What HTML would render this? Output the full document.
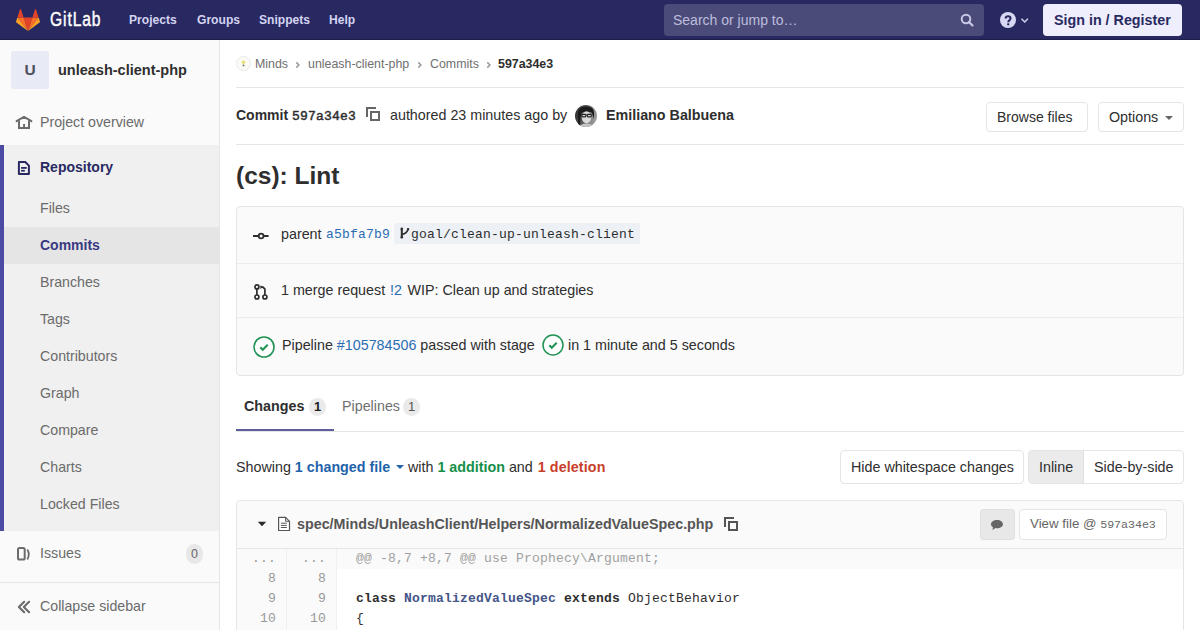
<!DOCTYPE html>
<html><head><meta charset="utf-8">
<style>
*{box-sizing:border-box;margin:0;padding:0}
html,body{width:1200px;height:630px;overflow:hidden;background:#fff}
body{font-family:"Liberation Sans",sans-serif;font-size:14px;color:#2e2e2e;position:relative}
.a{position:absolute;white-space:nowrap;line-height:1}
.mono{font-family:"Liberation Mono",monospace}
b{font-weight:bold}
/* header */
#hdr{position:absolute;left:0;top:0;width:1200px;height:40px;background:#292961}
.nav{color:#d4d4f2;font-weight:bold;font-size:12.1px}
/* sidebar */
#side{position:absolute;left:0;top:40px;width:220px;height:590px;background:#fafafa;border-right:1px solid #e5e5e5}
.si{color:#6b6b6b;font-size:14.2px}
.bc{font-size:12.4px;color:#707070}
.btn{border:1px solid #e5e5e5;border-radius:4px;background:#fff}
.badge{width:17px;height:18px;border-radius:9px;background:#eaeaea;color:#555;font-size:13px;text-align:center;line-height:18px}
.ln{font-size:13px;color:#999;text-align:right;letter-spacing:0.2px}
.code{font-size:13px;color:#2e2e2e;letter-spacing:0.2px}
</style></head><body>

<div id="hdr">
  <div class="a" style="left:0;top:39px;width:1200px;height:1px;background:#1e1e4a"></div>
  <svg class="a" style="left:16px;top:9px" width="24" height="22" viewBox="0 0 36 33">
    <path fill="#e24329" d="M18 33L24.6 12.6H11.4z"/>
    <path fill="#fc6d26" d="M18 33L11.4 12.6H2.1z"/>
    <path fill="#fca326" d="M2.1 12.6L.1 18.8c-.2.6 0 1.2.5 1.5L18 33z"/>
    <path fill="#e24329" d="M2.1 12.6h9.3L7.4.3c-.2-.6-1.1-.6-1.3 0z"/>
    <path fill="#fc6d26" d="M18 33l6.6-20.4h9.3z"/>
    <path fill="#fca326" d="M33.9 12.6l2 6.2c.2.6 0 1.2-.5 1.5L18 33z"/>
    <path fill="#e24329" d="M33.9 12.6h-9.3L28.6.3c.2-.6 1.1-.6 1.3 0z"/>
  </svg>
  <div class="a" style="left:50px;top:10px;font-size:19.6px;letter-spacing:1.1px;color:#fff;-webkit-text-stroke:0.4px #fff;transform:scaleX(0.8);transform-origin:0 0">GitLab</div>
  <div class="a nav" style="left:129px;top:14px">Projects</div>
  <div class="a nav" style="left:197px;top:14px">Groups</div>
  <div class="a nav" style="left:259px;top:14px">Snippets</div>
  <div class="a nav" style="left:329px;top:14px">Help</div>
  <div class="a" style="left:664px;top:4px;width:320px;height:32px;border-radius:4px;background:rgba(255,255,255,0.16)"></div>
  <div class="a" style="left:673px;top:13px;font-size:14px;color:#bdbddb">Search or jump to…</div>
  <svg class="a" style="left:960px;top:13px" width="14" height="14" viewBox="0 0 14 14"><circle cx="6" cy="6" r="4.3" fill="none" stroke="#c8c8e6" stroke-width="2"/><path d="M9 9l3.5 3.5" stroke="#c8c8e6" stroke-width="2.2" stroke-linecap="round"/></svg>
  <svg class="a" style="left:1000px;top:12px" width="32" height="16" viewBox="0 0 32 16"><circle cx="8" cy="8" r="8" fill="#d8d8f4"/><path d="M5.6 6.4C5.6 4.9 6.7 4.2 8 4.2c1.4 0 2.5.9 2.5 2.2 0 1.8-2.2 1.9-2.2 3.8" fill="none" stroke="#292961" stroke-width="2.1"/><rect x="7.2" y="11.3" width="2.1" height="2" fill="#292961"/><path d="M21.5 6.8l3.2 3.2 3.2-3.2" fill="none" stroke="#d1d1f0" stroke-width="1.5"/></svg>
  <div class="a" style="left:1043px;top:4px;width:139px;height:32px;border-radius:4px;background:#eeeefc"></div>
  <div class="a" style="left:1054px;top:13px;font-size:14.3px;font-weight:bold;color:#292961">Sign in / Register</div>
</div>

<div id="side">
  <div class="a" style="left:11px;top:11px;width:38px;height:38px;border-radius:3px;background:#e8eaf5"></div>
  <div class="a" style="left:11px;top:22px;width:38px;text-align:center;font-size:15.5px;font-weight:bold;color:#4f4f5c">U</div>
  <div class="a" style="left:58px;top:23px;font-size:14.5px;font-weight:bold;color:#2e2e2e">unleash-client-php</div>
  <!-- project overview -->
  <svg class="a" style="left:12px;top:70px" width="24" height="24" viewBox="0 0 24 24"><path d="M4.6 11.2L12 6.9l7.4 4.3" fill="none" stroke="#6b6b6b" stroke-width="2" stroke-linecap="round" stroke-linejoin="round"/><path d="M7 10.5V18h10v-7.5" fill="none" stroke="#6b6b6b" stroke-width="2"/><rect x="11.1" y="14" width="1.9" height="4" fill="#6b6b6b"/></svg>
  <div class="a si" style="left:40px;top:75px">Project overview</div>
  <!-- repository section -->
  <div class="a" style="left:0;top:105px;width:219px;height:386px;background:#f0f0f0"></div>
  <div class="a" style="left:0;top:105px;width:4px;height:386px;background:#4b4ba3"></div>
  <div class="a" style="left:4px;top:187px;width:215px;height:37px;background:#e5e5e5"></div>
  <svg class="a" style="left:12px;top:116px" width="24" height="24" viewBox="0 0 24 24"><path d="M6.9 6H13.3L16.9 9.6V17.9H6.9z" fill="none" stroke="#292961" stroke-width="2" stroke-linejoin="round"/><rect x="9.1" y="11" width="5.6" height="1.8" fill="#292961"/><rect x="9.1" y="13.9" width="3.7" height="1.7" fill="#292961"/></svg>
  <div class="a" style="left:40px;top:120px;font-weight:bold;color:#292961">Repository</div>
  <div class="a si" style="left:40px;top:161px">Files</div>
  <div class="a" style="left:40px;top:198px;font-weight:bold;color:#393982">Commits</div>
  <div class="a si" style="left:40px;top:235px">Branches</div>
  <div class="a si" style="left:40px;top:272px">Tags</div>
  <div class="a si" style="left:40px;top:309px">Contributors</div>
  <div class="a si" style="left:40px;top:346px">Graph</div>
  <div class="a si" style="left:40px;top:383px">Compare</div>
  <div class="a si" style="left:40px;top:420px">Charts</div>
  <div class="a si" style="left:40px;top:457px">Locked Files</div>
  <!-- issues -->
  <svg class="a" style="left:12px;top:501px" width="24" height="24" viewBox="0 0 24 24"><rect x="6" y="7" width="6.7" height="11.6" rx="1.6" fill="none" stroke="#6b6b6b" stroke-width="2"/><path d="M15.3 8.6Q18.4 13.5 15.3 18.4" fill="none" stroke="#6b6b6b" stroke-width="1.8"/></svg>
  <div class="a si" style="left:40px;top:506px">Issues</div>
  <div class="a" style="left:186px;top:504px;width:17px;height:20px;border-radius:9px;background:#e8e8e8;color:#666;font-size:12.5px;text-align:center;line-height:20px">0</div>
  <div class="a" style="left:0;top:542px;width:219px;height:1px;background:#e5e5e5"></div>
  <svg class="a" style="left:12px;top:554px" width="24" height="24" viewBox="0 0 24 24"><path d="M12.2 7.8L6.9 13l5.3 5.2M17.1 7.8L11.8 13l5.3 5.2" fill="none" stroke="#6b6b6b" stroke-width="2.1" stroke-linecap="round" stroke-linejoin="round"/></svg>
  <div class="a si" style="left:40px;top:559px">Collapse sidebar</div>
</div>

<div id="main">
  <!-- breadcrumbs -->
  <svg class="a" style="left:236px;top:56px" width="15" height="15" viewBox="0 0 15 15"><circle cx="7.5" cy="7.5" r="7" fill="#fbfbf6" stroke="#e8e8ec" stroke-width="1"/><circle cx="7.5" cy="6.3" r="1.8" fill="#e9df7a"/><rect x="6.7" y="8.6" width="1.6" height="1.6" fill="#666"/></svg>
  <div class="a bc" style="left:255px;top:58px">Minds</div>
  <svg class="a" style="left:295px;top:61px" width="6" height="8" viewBox="0 0 6 8"><path d="M1.3 1.4l2.6 2.6-2.6 2.6" fill="none" stroke="#9a9a9a" stroke-width="1.5"/></svg>
  <div class="a bc" style="left:308px;top:58px">unleash-client-php</div>
  <svg class="a" style="left:417px;top:61px" width="6" height="8" viewBox="0 0 6 8"><path d="M1.3 1.4l2.6 2.6-2.6 2.6" fill="none" stroke="#9a9a9a" stroke-width="1.5"/></svg>
  <div class="a bc" style="left:430px;top:58px">Commits</div>
  <svg class="a" style="left:486px;top:61px" width="6" height="8" viewBox="0 0 6 8"><path d="M1.3 1.4l2.6 2.6-2.6 2.6" fill="none" stroke="#9a9a9a" stroke-width="1.5"/></svg>
  <div class="a bc" style="left:498px;top:58px;font-weight:bold;color:#2e2e2e">597a34e3</div>
  <div class="a" style="left:236px;top:87px;width:948px;height:1px;background:#e5e5e5"></div>

  <!-- commit header -->
  <div class="a" style="left:236px;top:108px;font-weight:bold;font-size:14px">Commit</div>
  <div class="a mono" style="left:292px;top:110px;font-size:13px;letter-spacing:0.2px;-webkit-text-stroke:0.45px #2e2e2e">597a34e3</div>
  <svg class="a" style="left:366px;top:107px" width="14" height="14" viewBox="0 0 14 14"><path d="M1 10V1h9" fill="none" stroke="#666" stroke-width="2"/><rect x="5" y="5" width="8" height="8" fill="none" stroke="#666" stroke-width="2"/></svg>
  <div class="a" style="left:390px;top:108px;font-size:14.3px">authored 23 minutes ago by</div>
  <svg class="a" style="left:575px;top:105px" width="22" height="22" viewBox="0 0 22 22"><defs><clipPath id="cc"><circle cx="11" cy="11" r="11"/></clipPath><linearGradient id="bg" x1="0" y1="0" x2="1" y2="0.3"><stop offset="0" stop-color="#262626"/><stop offset="0.45" stop-color="#505050"/><stop offset="1" stop-color="#9a9a9a"/></linearGradient></defs><g clip-path="url(#cc)"><rect width="22" height="22" fill="url(#bg)"/><path d="M3 20V9c0-5 3.5-7.5 8.5-7.5S19 4 19 8.5V14c-1-3-2-6-3-7H7C6 8 5 14 5 20z" fill="#1c1c1c"/><ellipse cx="11.5" cy="12.3" rx="4.7" ry="6.1" fill="#dadada"/><g fill="#cfcfcf" stroke="#262626" stroke-width="1.1"><rect x="6.9" y="9.4" width="3.9" height="2.5" rx="0.6"/><rect x="12.3" y="9.4" width="3.9" height="2.5" rx="0.6"/></g><path d="M10.8 10h1.5" stroke="#262626" stroke-width="1"/><path d="M4.5 23c.5-3 3-4.5 7-4.5s6.5 1.5 7 4.5z" fill="#c4c4c4"/></g></svg>
  <div class="a" style="left:606px;top:108px;font-weight:bold;font-size:14.3px">Emiliano Balbuena</div>
  <div class="a btn" style="left:986px;top:102px;width:102px;height:30px"></div>
  <div class="a" style="left:997px;top:110px;font-size:14px">Browse files</div>
  <div class="a btn" style="left:1098px;top:102px;width:86px;height:30px"></div>
  <div class="a" style="left:1109px;top:110px;font-size:14.3px">Options</div>
  <svg class="a" style="left:1164px;top:115px" width="10" height="6" viewBox="0 0 10 6"><path d="M1 1h8L5 5z" fill="#666"/></svg>
  <div class="a" style="left:236px;top:144px;width:948px;height:1px;background:#e5e5e5"></div>

  <!-- title -->
  <div class="a" style="left:236px;top:164px;font-weight:bold;font-size:24.5px">(cs): Lint</div>

  <!-- info box -->
  <div class="a" style="left:236px;top:206px;width:948px;height:170px;border:1px solid #e5e5e5;border-radius:4px;background:#fafafa"></div>
  <div class="a" style="left:237px;top:263px;width:946px;height:1px;background:#ececec"></div>
  <div class="a" style="left:237px;top:317px;width:946px;height:1px;background:#ececec"></div>
  <svg class="a" style="left:248px;top:222px" width="26" height="26" viewBox="0 0 26 26"><circle cx="13.1" cy="13.95" r="2.4" fill="none" stroke="#2e2e2e" stroke-width="1.8"/><path d="M5 13.95h5.8M15.6 13.95h5" stroke="#2e2e2e" stroke-width="1.9"/></svg>
  <div class="a" style="left:281px;top:227px;font-size:14.3px">parent</div>
  <div class="a mono" style="left:326px;top:228px;font-size:13px;letter-spacing:0.2px;color:#2a6db3">a5bfa7b9</div>
  <div class="a" style="left:394px;top:223px;width:246px;height:21px;border-radius:2px;background:#edf1f5"></div>
  <svg class="a" style="left:399px;top:227px" width="12" height="13" viewBox="0 0 12 13"><g fill="none" stroke="#2e2e2e" stroke-linecap="round"><path d="M2.8 1.9V10.2" stroke-width="2"/><path d="M2.9 7.3C6 6.8 8.4 5 9.1 2.1" stroke-width="1.8"/></g><circle cx="2.8" cy="1.9" r="1.3" fill="#2e2e2e"/><circle cx="2.8" cy="10.2" r="1.3" fill="#2e2e2e"/><circle cx="9.1" cy="2.1" r="1.2" fill="#2e2e2e"/></svg>
  <div class="a mono" style="left:411px;top:228px;font-size:13px;letter-spacing:0.2px">goal/clean-up-unleash-client</div>

  <svg class="a" style="left:248px;top:278px" width="26" height="26" viewBox="0 0 26 26"><g fill="none" stroke="#2e2e2e" stroke-width="1.7"><circle cx="8.9" cy="8.9" r="2"/><circle cx="8.9" cy="19" r="2"/><circle cx="16.9" cy="19" r="2"/><path d="M8.9 10.9V17M16.9 17V11.2L15 9.2H13.2"/></g><path d="M12.4 7.2L14.8 9.1 12.4 11z" fill="#2e2e2e"/></svg>
  <div class="a" style="left:281px;top:283px;font-size:14.3px">1 merge request <span style="color:#2a6db3;margin:0 1.5px 0 1px">!2</span> WIP: Clean up and strategies</div>

  <svg class="a" style="left:253px;top:336px" width="22" height="22" viewBox="0 0 22 22"><circle cx="11" cy="11" r="10" fill="#fff" stroke="#1f9254" stroke-width="1.6"/><path d="M7.3 11.2l2.5 2.5 4.9-4.9" fill="none" stroke="#1f9254" stroke-width="2.1"/></svg>
  <div class="a" style="left:282px;top:338px;font-size:14.3px">Pipeline <span style="color:#2a6db3">#105784506</span> passed with stage</div>
  <svg class="a" style="left:542px;top:334px" width="22" height="22" viewBox="0 0 22 22"><circle cx="11" cy="11" r="10" fill="#fff" stroke="#1f9254" stroke-width="1.5"/><path d="M7.3 11.2l2.5 2.5 4.9-4.9" fill="none" stroke="#1f9254" stroke-width="2.1"/></svg>
  <div class="a" style="left:568px;top:338px;font-size:14.3px">in 1 minute and 5 seconds</div>

  <!-- tabs -->
  <div class="a" style="left:236px;top:431px;width:948px;height:1px;background:#e5e5e5"></div>
  <div class="a" style="left:236px;top:429px;width:98px;height:2px;background:#5e5e9c"></div>
  <div class="a" style="left:244px;top:399px;font-weight:bold;font-size:14.3px;color:#2e2e2e">Changes</div>
  <div class="a badge" style="left:309px;top:398px;font-weight:bold;color:#1f1f1f">1</div>
  <div class="a" style="left:342px;top:399px;font-size:14.3px;color:#707070">Pipelines</div>
  <div class="a badge" style="left:403px;top:398px">1</div>

  <!-- showing -->
  <div class="a" style="left:236px;top:459.5px;font-size:14.3px">Showing <b style="color:#1f63ab">1 changed file</b></div>
  <svg class="a" style="left:395px;top:464px" width="10" height="6" viewBox="0 0 10 6"><path d="M1 1h8L5 5z" fill="#1f63ab"/></svg>
  <div class="a" style="left:408px;top:459.5px;font-size:14.3px">with <b style="color:#168f48">1 addition</b> and <b style="color:#c9402a;margin-left:1px;letter-spacing:0.1px">1 deletion</b></div>
  <div class="a btn" style="left:840px;top:450px;width:184px;height:34px"></div>
  <div class="a" style="left:851px;top:460px;font-size:14.3px">Hide whitespace changes</div>
  <div class="a btn" style="left:1028px;top:450px;width:156px;height:34px"></div>
  <div class="a" style="left:1029px;top:451px;width:55px;height:32px;background:#ebebeb;border-right:1px solid #e0e0e0"></div>
  <div class="a" style="left:1039px;top:460px;font-size:14.3px">Inline</div>
  <div class="a" style="left:1094px;top:460px;font-size:14.3px">Side-by-side</div>

  <!-- file -->
  <div class="a" style="left:236px;top:500px;width:948px;height:140px;border:1px solid #e5e5e5;border-radius:4px;background:#fff"></div>
  <div class="a" style="left:237px;top:501px;width:946px;height:48px;background:#fafafa;border-bottom:1px solid #e5e5e5;border-radius:4px 4px 0 0"></div>
  <svg class="a" style="left:257px;top:521px" width="10" height="6" viewBox="0 0 10 6"><path d="M0.8 0.8h8.4L5 5.2z" fill="#2a2a2a"/></svg>
  <svg class="a" style="left:277px;top:516px" width="14" height="16" viewBox="0 0 14 16"><path d="M1.6 1.4H8.6L12.5 5.3V14.5H1.6z" fill="#fff" stroke="#555" stroke-width="1.2" stroke-linejoin="round"/><path d="M8.6 1.4V5.3H12.5" fill="none" stroke="#555" stroke-width="1"/><path d="M3.9 7.2h5.9M3.9 9.4h5.9M3.9 11.5h5.9" stroke="#555" stroke-width="1"/></svg>
  <div class="a" style="left:297px;top:517px;font-weight:bold;font-size:14.3px;color:#555">spec/Minds/UnleashClient/Helpers/NormalizedValueSpec.php</div>
  <svg class="a" style="left:724px;top:517px" width="14" height="14" viewBox="0 0 14 14"><path d="M1 10V1h9" fill="none" stroke="#555" stroke-width="2"/><rect x="5" y="5" width="8" height="8" fill="none" stroke="#555" stroke-width="2"/></svg>
  <div class="a" style="left:980px;top:509px;width:35px;height:31px;border-radius:3px;background:#e8e8e8;border:1px solid #e0e0e0"></div>
  <svg class="a" style="left:990px;top:519px" width="14" height="12" viewBox="0 0 14 12"><path d="M7 1C3.5 1 1 3 1 5.2c0 1.3.8 2.4 2 3.1L2.5 11l3-2c.5.1 1 .2 1.5.2 3.5 0 6-2 6-4S10.5 1 7 1z" fill="#666"/></svg>
  <div class="a btn" style="left:1019px;top:509px;width:148px;height:31px"></div>
  <div class="a" style="left:1030px;top:517px;font-size:13.3px;color:#666">View file @ <span class="mono" style="font-size:11.6px">597a34e3</span></div>

  <!-- diff -->
  <div class="a" style="left:237px;top:549px;width:100px;height:81px;background:#fafafa"></div>
  <div class="a" style="left:286px;top:549px;width:1px;height:81px;background:#f0f0f0"></div>
  <div class="a" style="left:336px;top:549px;width:1px;height:81px;background:#f0f0f0"></div>
  <div class="a" style="left:337px;top:549px;width:846px;height:20px;background:#fafafa"></div>
  <div class="a mono ln" style="left:237px;top:552px;width:39px">...</div>
  <div class="a mono ln" style="left:287px;top:552px;width:39px">...</div>
  <div class="a mono code" style="left:356px;top:552px;color:#a0a0a0">@@ -8,7 +8,7 @@ use Prophecy\Argument;</div>
  <div class="a mono ln" style="left:237px;top:572px;width:39px">8</div>
  <div class="a mono ln" style="left:287px;top:572px;width:39px">8</div>
  <div class="a mono ln" style="left:237px;top:592px;width:39px">9</div>
  <div class="a mono ln" style="left:287px;top:592px;width:39px">9</div>
  <div class="a mono code" style="left:356px;top:592px"><b>class</b> <b style="color:#445588">NormalizedValueSpec</b> <b>extends</b> ObjectBehavior</div>
  <div class="a mono ln" style="left:237px;top:612px;width:39px">10</div>
  <div class="a mono ln" style="left:287px;top:612px;width:39px">10</div>
  <div class="a mono code" style="left:356px;top:612px">{</div>
</div>

</body></html>
